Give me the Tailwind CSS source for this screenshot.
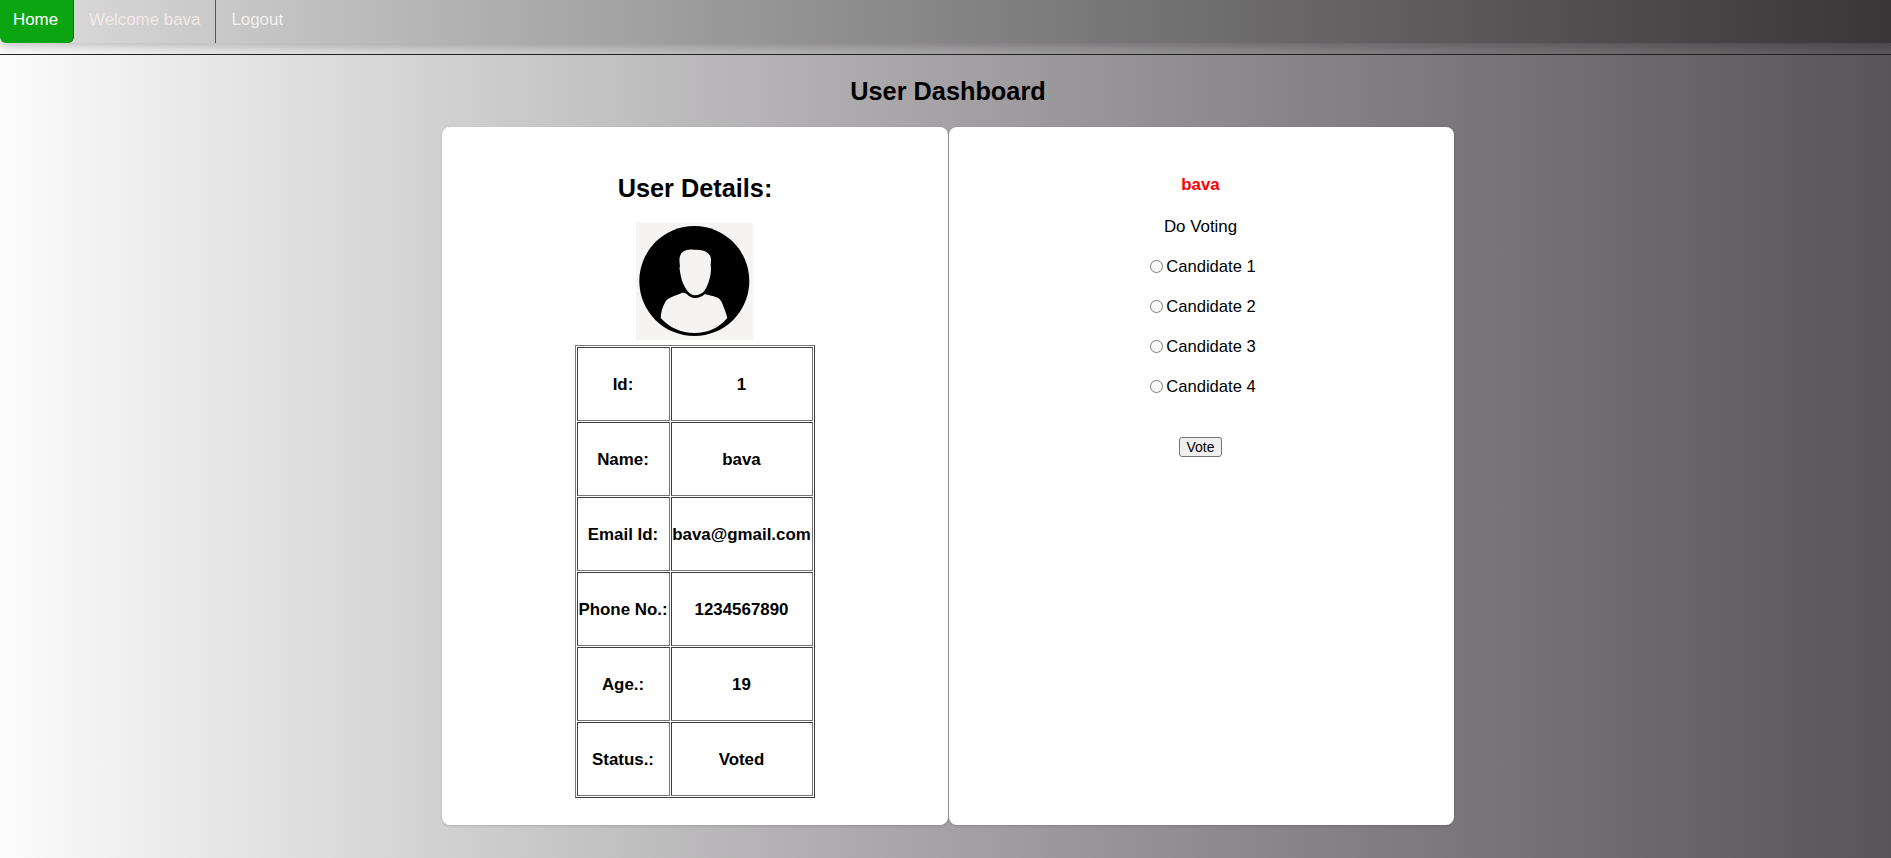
<!DOCTYPE html>
<html>
<head>
<meta charset="utf-8">
<script src="https://cdn.jsdelivr.net/npm/@tailwindcss/browser@4"></script>
<title>User Dashboard</title>
</head>
<body class="h-[858px] overflow-hidden bg-gradient-to-r from-[#fcfcfc] via-[#a4a2a4] to-[#595458] font-['Liberation_Sans',Arial,sans-serif] text-[16.9px] text-black">
<nav class="flex h-[43px] rounded-bl-[6px] bg-gradient-to-r from-[#dedede] to-[#383637] shadow-[0_4px_8px_0_rgba(0,0,0,0.2)]">
  <a class="flex h-full w-[74px] items-center rounded-b-[6px] border-r border-[#0b6b2a] bg-[#0ca512] pb-[3px] pl-[13px] text-white">Home</a>
  <a class="flex h-full items-center border-r border-[#1a6a8a] px-[15px] pb-[3px] text-[#f2e8e8]">Welcome bava</a>
  <a class="flex h-full items-center px-[15px] pb-[3px] text-[#f2f0f0]">Logout</a>
</nav>
<hr class="mt-[11px] border-t border-[#1c241c]">
<div class="pl-[5px]">
<h1 class="mt-[22px] text-center text-[25.3px] leading-[28px] font-bold">User Dashboard</h1>
<main class="mt-[22px] flex justify-center gap-px">
  <section class="flex h-[698px] w-[506px] flex-col items-center rounded-[8px] bg-white pt-[47px] shadow-[0_1px_3px_rgba(0,0,0,0.15)]">
    <h2 class="text-[25.3px] leading-[28px] font-bold">User Details:</h2>
    <svg class="mt-[21px] mr-[1px] block h-[117px] w-[117px]" viewBox="0 0 117 117" role="img" aria-label="User avatar">
      <rect width="117" height="117" fill="#f5f4f2"/>
      <circle cx="58.3" cy="58" r="55" fill="#000"/>
      <path fill="#f5f4f2" d="M24.7 95 C25 90 26 86 27.3 83.3 C28.5 80 30 77 32.3 75.7 C36 73.5 41 72 45.7 70 C47.5 69.5 49 70 50.7 71 C53 73.5 56 75 59 75 C62.5 75 66 73.5 69 71 C72 72 78 73 82.3 75 C85 77 86.5 80.5 87.3 83.3 C88.8 87 90.5 91 91.3 95 C83 105 71.5 110 58.5 110 C45 110 33 104.5 24.7 95 Z"/>
      <path fill="#f5f4f2" d="M43.5 45 L44 43 C43.3 39 43 35 44.5 32 C45.5 29.5 47.5 28 50 27.3 C52.5 26.6 54.5 26.5 57.3 26.7 C61.5 26.7 66 26.8 69.5 28.5 C73 30.3 75 33 75 36.7 L74.7 43 L75 45 C75 49 74.5 53 73.3 56.7 C72 61 70.5 65 68 68.3 C65.5 71 62.5 72.3 59 72.3 C56.5 72.3 54.3 71 52.3 69 C49.5 65.5 47 61 45.7 56.7 C44.7 53 44 49 43.5 45 Z"/>
    </svg>
    <table class="mt-[5px] mr-[1px] w-[240px] table-fixed border-separate border-spacing-[1px] border border-t-[#767676] border-r-[#3c3c3c] border-b-[#3c3c3c] border-l-[#767676] text-center font-bold">
      <colgroup><col class="w-[93px]"><col class="w-[142px]"></colgroup>
      <tbody>
        <tr class="h-[74px]"><td class="border border-t-[#3c3c3c] border-r-[#767676] border-b-[#767676] border-l-[#3c3c3c] px-0 pt-[2px] pb-0">Id:</td><td class="border border-t-[#3c3c3c] border-r-[#767676] border-b-[#767676] border-l-[#3c3c3c] px-0 pt-[2px] pb-0">1</td></tr>
        <tr class="h-[74px]"><td class="border border-t-[#3c3c3c] border-r-[#767676] border-b-[#767676] border-l-[#3c3c3c] px-0 pt-[2px] pb-0">Name:</td><td class="border border-t-[#3c3c3c] border-r-[#767676] border-b-[#767676] border-l-[#3c3c3c] px-0 pt-[2px] pb-0">bava</td></tr>
        <tr class="h-[74px]"><td class="border border-t-[#3c3c3c] border-r-[#767676] border-b-[#767676] border-l-[#3c3c3c] px-0 pt-[2px] pb-0">Email Id:</td><td class="border border-t-[#3c3c3c] border-r-[#767676] border-b-[#767676] border-l-[#3c3c3c] px-0 pt-[2px] pb-0">bava@gmail.com</td></tr>
        <tr class="h-[74px]"><td class="border border-t-[#3c3c3c] border-r-[#767676] border-b-[#767676] border-l-[#3c3c3c] px-0 pt-[2px] pb-0">Phone No.:</td><td class="border border-t-[#3c3c3c] border-r-[#767676] border-b-[#767676] border-l-[#3c3c3c] px-0 pt-[2px] pb-0">1234567890</td></tr>
        <tr class="h-[74px]"><td class="border border-t-[#3c3c3c] border-r-[#767676] border-b-[#767676] border-l-[#3c3c3c] px-0 pt-[2px] pb-0">Age.:</td><td class="border border-t-[#3c3c3c] border-r-[#767676] border-b-[#767676] border-l-[#3c3c3c] px-0 pt-[2px] pb-0">19</td></tr>
        <tr class="h-[74px]"><td class="border border-t-[#3c3c3c] border-r-[#767676] border-b-[#767676] border-l-[#3c3c3c] px-0 pt-[2px] pb-0">Status.:</td><td class="border border-t-[#3c3c3c] border-r-[#767676] border-b-[#767676] border-l-[#3c3c3c] px-0 pt-[2px] pb-0">Voted</td></tr>
      </tbody>
    </table>
  </section>
  <section class="flex h-[698px] w-[505px] flex-col items-center rounded-[8px] bg-white pt-[49px] pr-[2px] shadow-[0_1px_3px_rgba(0,0,0,0.15)]">
    <p class="leading-[18px] font-bold text-[#ff0000]">bava</p>
    <p class="mt-[24px] leading-[18px]">Do Voting</p>
    <label class="mt-[22px] flex items-center text-[16.6px] leading-[18px]"><input type="radio" name="c" class="mr-[3px] mb-[1px] ml-[5px] block"><span>Candidate 1</span></label>
    <label class="mt-[22px] flex items-center text-[16.6px] leading-[18px]"><input type="radio" name="c" class="mr-[3px] mb-[1px] ml-[5px] block"><span>Candidate 2</span></label>
    <label class="mt-[22px] flex items-center text-[16.6px] leading-[18px]"><input type="radio" name="c" class="mr-[3px] mb-[1px] ml-[5px] block"><span>Candidate 3</span></label>
    <label class="mt-[22px] flex items-center text-[16.6px] leading-[18px]"><input type="radio" name="c" class="mr-[3px] mb-[1px] ml-[5px] block"><span>Candidate 4</span></label>
    <button class="mt-[41px] h-[20px] rounded-[3px] border border-[#767676] bg-[#efefef] px-[6px] text-[14px] leading-[15px]">Vote</button>
  </section>
</main>
</div>
</body>
</html>
